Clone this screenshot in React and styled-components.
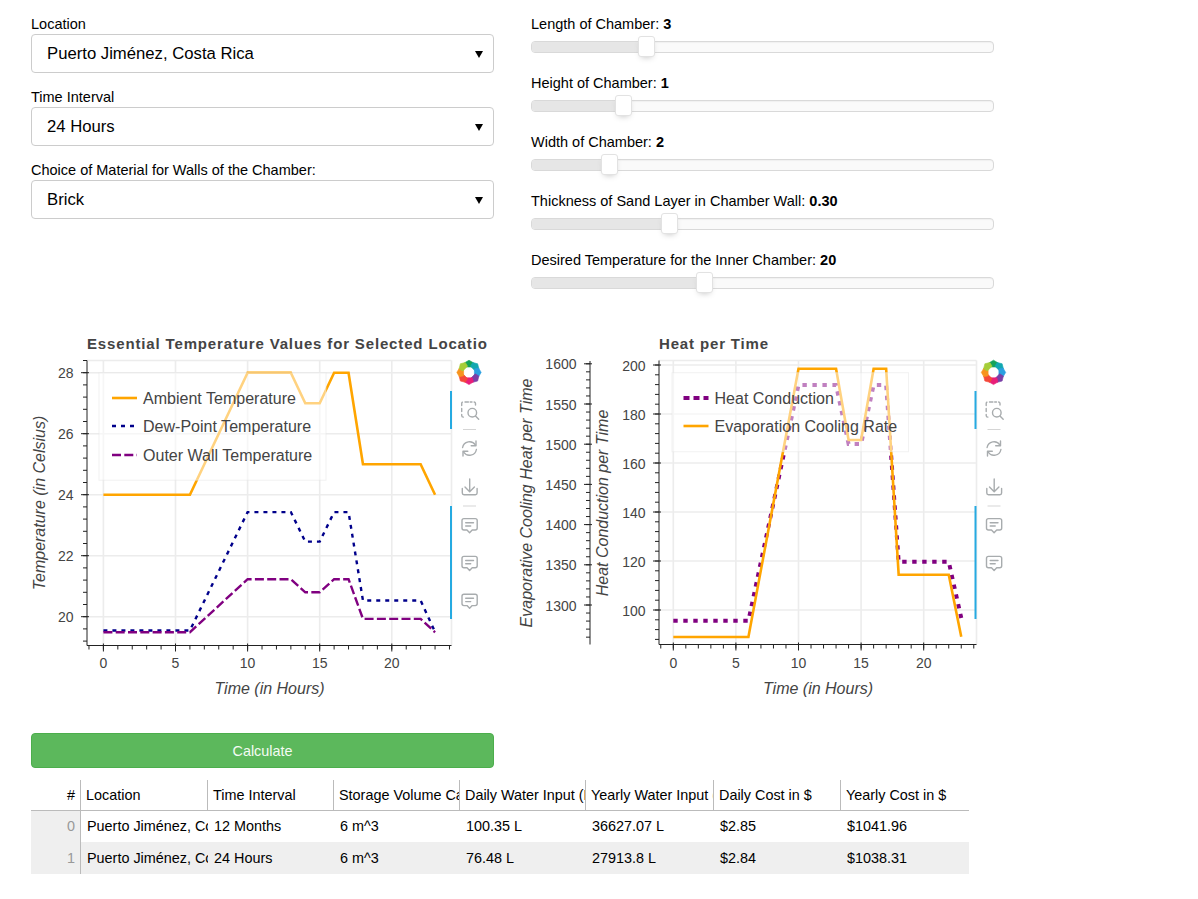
import React from "react"
import styled, { createGlobalStyle } from "styled-components"

const range = (from, to, step) => {
  const out = []
  const n = Math.round((to - from) / step)
  for (let i = 0; i <= n; i++) out.push(from + i * step)
  return out
}

const HOURS = [0, 6, 10, 13, 14, 15, 16, 17, 18, 22, 23]
const points = (xOf, ys) => HOURS.map((h, i) => `${xOf(h)},${ys[i]}`).join(" ")
const shape = (low, high, dip, plateau, end) => [low, low, high, high, dip, dip, high, high, plateau, plateau, end]

const tempX = (t) => 103.4 + 14.42 * t
const tempY = (v) => 616.7 - (v - 20) * 30.5
const heatX = (t) => 673.3 + 12.52 * t
const heatY = (v) => 610 - (v - 100) * 2.45
const coolY = (v) => 605 - (v - 1300) * 0.804

const DASH = { dotted: "4 5", dashed: "9 3.3", heavy: "4.4 5.6" }

const tempChart = {
  viewBox: "31 330 457 370",
  title: "Essential Temperature Values for Selected Locatio",
  titleX: 87,
  frame: { l: 87, t: 360.5, r: 451.5, b: 645.5 },
  xOf: tempX,
  xLabelX: 269.5,
  yAxes: [
    {
      x: 87,
      yOf: tempY,
      major: [20, 22, 24, 26, 28],
      minor: range(19.2, 28.4, 0.4),
      label: "Temperature (in Celsius)",
      labelX: 44.5,
      grid: true,
    },
  ],
  series: [
    { color: "#ffa500", width: 2.6, ys: shape(tempY(24), tempY(28), tempY(27), tempY(25), tempY(24)) },
    { color: "#00008b", width: 2.4, dash: DASH.dotted, ys: shape(tempY(19.55), tempY(23.43), tempY(22.46), tempY(20.53), tempY(19.5)) },
    { color: "#800080", width: 2.4, dash: DASH.dashed, ys: shape(tempY(19.49), tempY(21.23), tempY(20.8), tempY(19.93), tempY(19.49)) },
  ],
  legend: {
    x: 99,
    y: 372.7,
    w: 227,
    h: 107.5,
    lineX: 112,
    items: [
      { text: "Ambient Temperature", y: 398, color: "#ffa500", width: 2.6 },
      { text: "Dew-Point Temperature", y: 426, color: "#00008b", width: 2.4, dash: DASH.dotted },
      { text: "Outer Wall Temperature", y: 455, color: "#800080", width: 2.4, dash: DASH.dashed },
    ],
  },
  toolbarShift: 0,
  hovers: 3,
}

const heatChart = {
  viewBox: "518 330 492 370",
  title: "Heat per Time",
  titleX: 659,
  frame: { l: 659, t: 360.5, r: 976.5, b: 644.5 },
  xOf: heatX,
  xLabelX: 818,
  yAxes: [
    {
      x: 590,
      yOf: coolY,
      major: [1300, 1350, 1400, 1450, 1500, 1550, 1600],
      minor: range(1260, 1600, 10),
      label: "Evaporative Cooling Heat per Time",
      labelX: 531.5,
      top: 361,
    },
    {
      x: 659,
      yOf: heatY,
      major: [100, 120, 140, 160, 180, 200],
      minor: range(88, 200, 4),
      label: "Heat Conduction per Time",
      labelX: 607.5,
      grid: true,
    },
  ],
  series: [
    { color: "#800080", width: 4, dash: DASH.heavy, ys: [620.7, 620.7, 385, 385, 444, 444, 385, 385, 561.7, 561.7, 618] },
    { color: "#ffa500", width: 2.6, ys: [637, 637, 368.7, 368.7, 440, 440, 368.7, 368.7, 574.7, 574.7, 636.7] },
  ],
  legend: {
    x: 672,
    y: 372.7,
    w: 236.5,
    h: 79,
    lineX: 683.5,
    items: [
      { text: "Heat Conduction", y: 398, color: "#800080", width: 4, dash: "6 4" },
      { text: "Evaporation Cooling Rate", y: 426, color: "#ffa500", width: 2.6 },
    ],
  },
  toolbarShift: 524.5,
  hovers: 2,
}

const locations = [
  { label: "Location", value: "Puerto Jiménez, Costa Rica" },
  { label: "Time Interval", value: "24 Hours" },
  { label: "Choice of Material for Walls of the Chamber:", value: "Brick" },
]

const sliders = [
  { label: "Length of Chamber:", value: "3", at: 115.7 },
  { label: "Height of Chamber:", value: "1", at: 92.7 },
  { label: "Width of Chamber:", value: "2", at: 78 },
  { label: "Thickness of Sand Layer in Chamber Wall:", value: "0.30", at: 138.7 },
  { label: "Desired Temperature for the Inner Chamber:", value: "20", at: 173 },
]

const columns = [
  "Location",
  "Time Interval",
  "Storage Volume Capacity",
  "Daily Water Input (L)",
  "Yearly Water Input (L)",
  "Daily Cost in $",
  "Yearly Cost in $",
]

const rows = [
  ["Puerto Jiménez, Costa Rica", "12 Months", "6 m^3", "100.35 L", "36627.07 L", "$2.85", "$1041.96"],
  ["Puerto Jiménez, Costa Rica", "24 Hours", "6 m^3", "76.48 L", "27913.8 L", "$2.84", "$1038.31"],
]

const LOGO_COLORS = ["#14a35a", "#12a8b0", "#2b9fe0", "#7a3fa6", "#e91e78", "#f4483a", "#f7931e", "#a6ce39"]

const Logo = ({ cx, cy }) => (
  <g transform={`translate(${cx} ${cy})`}>
    {LOGO_COLORS.map((color, i) => (
      <path
        key={color}
        transform={`rotate(${i * 45})`}
        d="M-3.4 -5.4 L-4.4 -9.6 L0 -12.2 L4.4 -9.6 L3.4 -5.4 Z"
        fill={color}
        stroke={color}
        strokeWidth="0.6"
        strokeLinejoin="round"
      />
    ))}
  </g>
)

const Toolbar = ({ shift, hovers }) => (
  <g transform={`translate(${shift} 0)`}>
    <Logo cx={469} cy={372.4} />
    <ActiveBar x="450" y="391" width="2" height="38" />
    <ActiveBar x="450" y="506" width="2" height="113" />
    <ToolSep x1="463" x2="476" y1="429.5" y2="429.5" />
    <ToolSep x1="463" x2="476" y1="506" y2="506" />

    <ToolIcon>
      <path d="M465 402h7M461.7 405.5v-2a1.6 1.6 0 0 1 1.6-1.6M475.5 405v-1.4a1.6 1.6 0 0 0-1.6-1.6M461.7 408.5v3M461.7 414.5v1a1.6 1.6 0 0 0 1.6 1.6h1.7" strokeDasharray="3.4 1.8" />
      <circle cx="472.3" cy="412.7" r="4.3" />
      <path d="M475.5 416l3.2 3.3" />
    </ToolIcon>

    <ToolIcon>
      <path d="M462.6 447.5A7 7 0 0 1 475.4 445" />
      <path d="M476.4 449.5A7 7 0 0 1 463.6 452" />
      <path d="M476 441v4.8h-4.8M463 456v-4.8h4.8" />
    </ToolIcon>

    <ToolIcon>
      <path d="M469.7 479v12.5M465 487l4.7 4.7 4.7-4.7" />
      <path d="M462.3 488.5v4.6a1.7 1.7 0 0 0 1.7 1.7h11.4a1.7 1.7 0 0 0 1.7-1.7v-4.6" />
    </ToolIcon>

    {range(0, hovers - 1, 1).map((i) => (
      <ToolIcon key={i} transform={`translate(0 ${i * 37.8})`}>
        <path d="M464 518.6h11.2a2 2 0 0 1 2 2v7.4a2 2 0 0 1-2 2h-3l-2.6 2.7-2.6-2.7h-3a2 2 0 0 1-2-2v-7.4a2 2 0 0 1 2-2z" />
        <path d="M465.7 522.7h7.8M465.7 526h5" />
      </ToolIcon>
    ))}
  </g>
)

const YAxis = ({ axis, bottom, top }) => {
  const { x, yOf, major, minor, label, labelX } = axis
  return (
    <g>
      <AxisLine x1={x} x2={x} y1={axis.top || top} y2={bottom} />
      {minor.map((v) => (
        <AxisLine key={v} x1={x - 4} x2={x} y1={yOf(v)} y2={yOf(v)} />
      ))}
      {major.map((v) => (
        <g key={v}>
          <AxisLine x1={x - 6} x2={x + 2} y1={yOf(v)} y2={yOf(v)} />
          <TickLabel x={x - 13.5} y={yOf(v) + 5.5} textAnchor="end">
            {v}
          </TickLabel>
        </g>
      ))}
      <AxisTitle x={labelX} y={503} textAnchor="middle" transform={`rotate(-90 ${labelX} 503)`}>
        {label}
      </AxisTitle>
    </g>
  )
}

const Chart = ({ config }) => {
  const { frame, xOf, legend, series, yAxes } = config
  const xMajor = [0, 5, 10, 15, 20]
  const gridAxis = yAxes.find((a) => a.grid)
  const [, , w, h] = config.viewBox.split(" ")

  return (
    <ChartSvg viewBox={config.viewBox} width={w} height={h}>
      <PlotTitle x={config.titleX} y={349}>
        {config.title}
      </PlotTitle>

      <GridLine x1={frame.l} x2={frame.r} y1={frame.t} y2={frame.t} />
      <GridLine x1={frame.r} x2={frame.r} y1={frame.t} y2={frame.b} />
      {xMajor.map((t) => (
        <GridLine key={t} x1={xOf(t)} x2={xOf(t)} y1={frame.t} y2={frame.b} />
      ))}
      {gridAxis.major.map((v) => (
        <GridLine key={v} x1={frame.l} x2={frame.r} y1={gridAxis.yOf(v)} y2={gridAxis.yOf(v)} />
      ))}

      {series.map((s) => (
        <DataLine
          key={s.color}
          points={points(xOf, s.ys)}
          stroke={s.color}
          strokeWidth={s.width}
          strokeDasharray={s.dash}
        />
      ))}

      <LegendBox x={legend.x} y={legend.y} width={legend.w} height={legend.h} />
      {legend.items.map((item) => (
        <g key={item.text}>
          <DataLine
            points={`${legend.lineX},${item.y} ${legend.lineX + 25},${item.y}`}
            stroke={item.color}
            strokeWidth={item.width}
            strokeDasharray={item.dash}
          />
          <LegendLabel x={legend.lineX + 31} y={item.y + 6}>
            {item.text}
          </LegendLabel>
        </g>
      ))}

      {yAxes.map((axis) => (
        <YAxis key={axis.label} axis={axis} bottom={frame.b} top={frame.t} />
      ))}

      <AxisLine x1={frame.l} x2={frame.r} y1={frame.b} y2={frame.b} />
      {range(-1, 24, 1).map((t) => (
        <AxisLine key={t} x1={xOf(t)} x2={xOf(t)} y1={frame.b} y2={frame.b + 4} />
      ))}
      {xMajor.map((t) => (
        <g key={t}>
          <AxisLine x1={xOf(t)} x2={xOf(t)} y1={frame.b - 2} y2={frame.b + 6} />
          <TickLabel x={xOf(t)} y={668} textAnchor="middle">
            {t}
          </TickLabel>
        </g>
      ))}
      <AxisTitle x={config.xLabelX} y={693.7} textAnchor="middle">
        Time (in Hours)
      </AxisTitle>

      <Toolbar shift={config.toolbarShift} hovers={config.hovers} />
    </ChartSvg>
  )
}

const App = () => (
  <Page>
    <GlobalStyle />
    <Controls>
      <Column>
        {locations.map((item) => (
          <Field key={item.label}>
            <FieldLabel>{item.label}</FieldLabel>
            <SelectWrap>
              <Select defaultValue={item.value}>
                <option>{item.value}</option>
              </Select>
            </SelectWrap>
          </Field>
        ))}
      </Column>
      <SliderColumn>
        {sliders.map((item) => (
          <Field key={item.label}>
            <FieldLabel>
              {item.label} <b>{item.value}</b>
            </FieldLabel>
            <Track>
              <TrackFill $at={item.at} />
              <Handle $at={item.at} />
            </Track>
          </Field>
        ))}
      </SliderColumn>
    </Controls>

    <Charts>
      <Chart config={tempChart} />
      <Chart config={heatChart} />
    </Charts>

    <CalculateButton>Calculate</CalculateButton>

    <Table>
      <TableRow $height={31} $lined>
        <IndexHead>#</IndexHead>
        {columns.map((name) => (
          <HeadCell key={name}>{name}</HeadCell>
        ))}
      </TableRow>
      {rows.map((row, i) => (
        <TableRow key={row[1]} $height={31 + i} $shaded={i === 1}>
          <IndexCell>{i}</IndexCell>
          {row.map((cell, j) => (
            <Cell key={j}>{cell}</Cell>
          ))}
        </TableRow>
      ))}
    </Table>
  </Page>
)

export default App

const GlobalStyle = createGlobalStyle`
  body {
    margin: 0;
    background: #fff;
    color: #000;
    font-family: "Liberation Sans", Arial, sans-serif;
    font-size: 14.5px;
  }
`

const Page = styled.div`
  padding: 14px 0 25px 31px;
  width: 1167px;
  box-sizing: border-box;
`

const Controls = styled.div`
  display: flex;
  gap: 37px;
`

const Column = styled.div`
  width: 463px;
  display: flex;
  flex-direction: column;
  gap: 14px;
`

const SliderColumn = styled(Column)`
  gap: 20px;
`

const Field = styled.div`
  display: flex;
  flex-direction: column;
`

const FieldLabel = styled.div`
  height: 20px;
  line-height: 20px;
  white-space: nowrap;
`

const SelectWrap = styled.div`
  position: relative;
  &::after {
    content: "";
    position: absolute;
    right: 11px;
    top: 17px;
    border-left: 4.5px solid transparent;
    border-right: 4.5px solid transparent;
    border-top: 7px solid #000;
    pointer-events: none;
  }
`

const Select = styled.select`
  appearance: none;
  display: block;
  width: 100%;
  height: 39px;
  padding: 0 15px;
  border: 1px solid #ccc;
  border-radius: 4px;
  background: #fff;
  color: #000;
  font-family: inherit;
  font-size: 16.7px;
`

const Track = styled.div`
  position: relative;
  height: 12px;
  margin-top: 7px;
  box-sizing: border-box;
  border: 1px solid #d9d9d9;
  border-radius: 4px;
  background: #fafafa;
  box-shadow: inset 0 1px 1px #f0f0f0;
`

const TrackFill = styled.div`
  width: ${(p) => p.$at}px;
  height: 100%;
  border-radius: 3px 0 0 3px;
  background: #e6e6e6;
`

const Handle = styled.div`
  position: absolute;
  top: -6px;
  left: ${(p) => p.$at - 9.5}px;
  width: 17px;
  height: 21px;
  box-sizing: border-box;
  border: 1px solid #e2e2e2;
  border-radius: 3px;
  background: #fff;
  box-shadow: 0 3px 6px -3px #bbb;
`

const Charts = styled.div`
  display: flex;
  gap: 30px;
  margin-top: 41px;
`

const ChartSvg = styled.svg`
  display: block;
  flex: none;
  font-family: "Liberation Sans", Arial, sans-serif;
`

const PlotTitle = styled.text`
  font-size: 15px;
  font-weight: 700;
  letter-spacing: 0.85px;
  fill: #444;
`

const TickLabel = styled.text`
  font-size: 14px;
  fill: #444;
`

const AxisTitle = styled.text`
  font-size: 16px;
  font-style: italic;
  fill: #444;
`

const LegendLabel = styled.text`
  font-size: 16.05px;
  fill: #444;
`

const GridLine = styled.line`
  stroke: #ececec;
  stroke-width: 1.6;
`

const AxisLine = styled.line`
  stroke: #222;
  stroke-width: 1;
`

const DataLine = styled.polyline`
  fill: none;
  stroke-linejoin: miter;
`

const LegendBox = styled.rect`
  fill: #fff;
  fill-opacity: 0.5;
  stroke: #e6e6e6;
  stroke-opacity: 0.5;
`

const ActiveBar = styled.rect`
  fill: #26aae1;
`

const ToolSep = styled.line`
  stroke: #d5d5d5;
  stroke-width: 1;
`

const ToolIcon = styled.g`
  fill: none;
  stroke: #a8acae;
  stroke-width: 1.4;
  stroke-linecap: round;
  stroke-linejoin: round;
`

const CalculateButton = styled.button`
  display: block;
  width: 463px;
  height: 35px;
  margin-top: 33px;
  padding: 0;
  border: 1px solid #4cae4c;
  border-radius: 4px;
  background: #5cb85c;
  color: #f4fbf4;
  font-family: inherit;
  font-size: 14.4px;
`

const Table = styled.div`
  width: 938px;
  margin-top: 12px;
  font-size: 14.4px;
`

const TableRow = styled.div`
  display: grid;
  grid-template-columns: 50px 127px 126px 126px 126px 128px 127px 128px;
  height: ${(p) => p.$height}px;
  line-height: ${(p) => p.$height - (p.$lined ? 1 : 0)}px;
  box-sizing: border-box;
  border-bottom: ${(p) => (p.$lined ? "1px solid #bbb" : "none")};
  background: ${(p) => (p.$shaded ? "#efefef" : "transparent")};
`

const Cell = styled.div`
  padding: 0 0 0 6px;
  overflow: hidden;
  white-space: nowrap;
`

const HeadCell = styled(Cell)`
  padding-left: 5px;
  border-right: 1px solid #bbb;
  &:last-child {
    border-right: none;
  }
`

const IndexHead = styled(HeadCell)`
  padding: 0 5px 0 0;
  text-align: right;
`

const IndexCell = styled(Cell)`
  padding: 0 5px 0 0;
  text-align: right;
  color: #999;
  background: #efefef;
  border-right: 1px solid #bbb;
`
